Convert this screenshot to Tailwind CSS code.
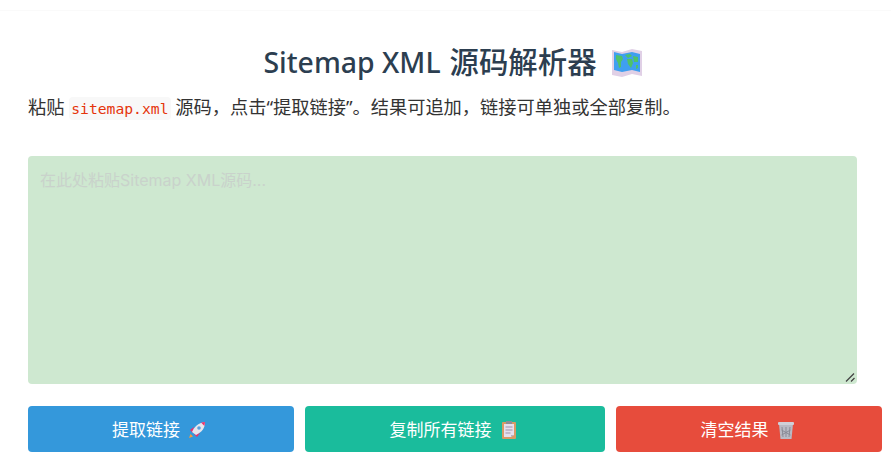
<!DOCTYPE html>
<html lang="en">
<head>
  <meta charset="utf-8"/>
  <title>Sitemap XML 源码解析器</title>
  <script src="https://cdn.jsdelivr.net/npm/@tailwindcss/browser@4"></script>
</head>
<body class="bg-white h-[471px] overflow-hidden font-['Noto_Sans','Noto_Sans_CJK_SC',sans-serif]">
  <div class="mt-[10px] border-t border-[#fafafa] px-[28px] pt-[29px]">
    <!-- heading -->
    <h1 class="flex justify-center items-center gap-[14px] h-[44px] text-[29.4px] font-medium text-[#2c3e50] leading-[44px] pl-[15px]">
      <span class="flex gap-[9px]"><span class="text-[28.4px] font-[550]">Sitemap XML</span><span>源码解析器</span></span>
      <svg class="w-[32px] h-[29px]" viewBox="0 0 32 29">
        <path d="M1 2l10 2 10-3 10 2v25l-10-2-10 3-10-2z" fill="#e0d0e6"/>
        <path d="M3 4l8 2 10-2 8 2v18l-8-2-10 2-8-2z" fill="#3f9ff0"/>
        <path d="M5 7l6 1 1 3-2 3 0 5-2 1-1-5-2-4zM14 7l5-1 2 2-4 2zM16 11l5 0 1 4-2 5-3-4zM22 8l5 1 0 5-4 0zM25 17l2 0 0 3-2 1z" fill="#4fc26a"/>
      </svg>
    </h1>
    <!-- intro -->
    <p class="mt-[11px] h-[24px] text-[18.24px] leading-[24px] text-[#333333] whitespace-nowrap">粘贴 <code class="rounded-[4px] bg-[#f8f8f8] px-[2px] py-[3px] text-[14.7px] text-[#e5340b] font-['DejaVu_Sans_Mono','Liberation_Mono',monospace]">sitemap.xml</code> 源码，点击“提取链接”。结果可追加，链接可单独或全部复制。</p>
    <!-- source input -->
    <div class="relative mt-[37px] w-[829px] h-[228px]">
      <textarea class="block w-full h-full resize-none rounded-[4px] bg-[#cee8d0] p-[12px] text-[16px] leading-[24px] font-['Inter','Noto_Sans_CJK_SC',sans-serif] placeholder:text-[#c9d2cb] outline-none" placeholder="在此处粘贴Sitemap XML源码..."></textarea>
      <svg class="absolute right-[2px] bottom-[2px] w-[10px] h-[10px] pointer-events-none" viewBox="0 0 10 10">
        <path d="M1 9.500L9 1.500M6 9.500L9.500 6" stroke="#444444" stroke-width="1.300" fill="none"/>
      </svg>
    </div>
    <!-- actions -->
    <div class="mt-[22px] flex gap-[11px] w-[854px]">
      <button class="flex items-center justify-center gap-[7px] w-[266px] h-[46px] pr-[3px] pt-[1px] rounded-[4px] bg-[#3498db] text-white text-[17px]">
        提取链接
        <svg class="w-[20px] h-[20px]" viewBox="0 0 20 20">
          <path d="M2 18l1.500-4 2.500 2.500z" fill="#f59a3c"/>
          <path d="M3 10l4-3-1 6zM10 17l3-4-6 1z" fill="#e8336b"/>
          <path d="M5 12c2-5 6-9 13-10 0 6-3 10-9 13z" fill="#e6e6ee"/>
          <path d="M14 2.600l4-.6-.6 4z" fill="#e8336b"/>
          <circle cx="12" cy="8" r="1.800" fill="#5aa0dc"/>
        </svg>
      </button>
      <button class="flex items-center justify-center gap-[7px] w-[300px] h-[46px] pr-[2px] pt-[1px] rounded-[4px] bg-[#1abc9c] text-white text-[17px]">
        复制所有链接
        <svg class="w-[20px] h-[20px]" viewBox="0 0 20 20">
          <rect x="3" y="2" width="14" height="17" rx="1" fill="#d99a66"/>
          <path d="M5 4h10v11l-3 2H5z" fill="#e6e0ee"/>
          <path d="M12 17l3-2h-3z" fill="#b7aec4"/>
          <path d="M6.500 7h7M6.500 10h7M6.500 13h5" stroke="#9d94ac" stroke-width="1"/>
          <rect x="7" y="1" width="6" height="3" fill="#8d8d96"/>
        </svg>
      </button>
      <button class="flex items-center justify-center gap-[7px] w-[266px] h-[46px] pr-[2px] pt-[1px] rounded-[4px] bg-[#e74c3c] text-white text-[17px]">
        清空结果
        <svg class="w-[20px] h-[20px]" viewBox="0 0 20 20">
          <path d="M3 4h14l-1.500 15h-11z" fill="#b9bac4"/>
          <rect x="2" y="2" width="16" height="3" rx="1" fill="#cfd0d8"/>
          <path d="M6 7l1 10M10 7v10M14 7l-1 10M5.500 10l9 5M14.500 10l-9 5" stroke="#8a8b96" stroke-width="1" fill="none"/>
        </svg>
      </button>
    </div>
  </div>
</body>
</html>
